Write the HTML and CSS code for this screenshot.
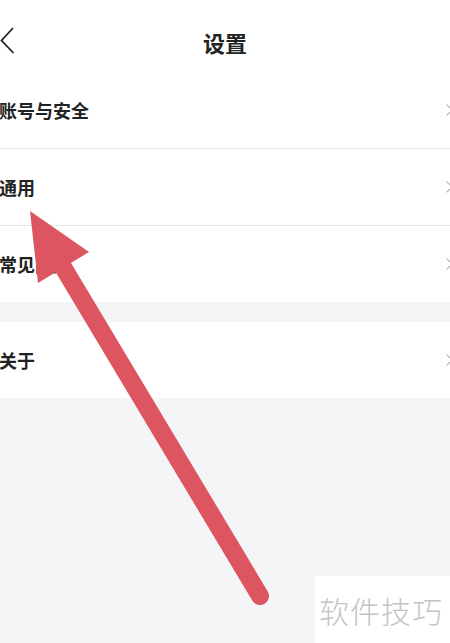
FILE: index.html
```html
<!DOCTYPE html>
<html lang="zh">
<head>
<meta charset="utf-8">
<link rel="stylesheet" href="styles.css">
</head>
<body>
<div class="page">
  <header class="header">
    <svg class="back" width="18" height="28" viewBox="0 0 18 28"><path d="M13 1 L1.5 13.5 L13.5 26" fill="none" stroke="#222" stroke-width="1.8"/></svg>
    <h1 class="title">设置</h1>
  </header>
  <section class="group">
    <div class="row"><span class="label">账号与安全</span><span class="chev"></span></div>
    <div class="row"><span class="label">通用</span><span class="chev"></span></div>
    <div class="row"><span class="label">常见问题</span><span class="chev"></span></div>
  </section>
  <section class="group gap">
    <div class="row"><span class="label">关于</span><span class="chev"></span></div>
  </section>
</div>
<svg class="arrow" width="450" height="643" viewBox="0 0 450 643">
  <line x1="60" y1="262" x2="260" y2="596" stroke="#dd5561" stroke-width="18" stroke-linecap="round"/>
  <polygon points="30,211 89,252 38,283" fill="#dd5561"/>
</svg>
<div class="watermark">软件技巧</div>
</body>
</html>
```
FILE: styles.css
```css
html, body {
  margin: 0;
  padding: 0;
}
body {
  width: 450px;
  height: 643px;
  overflow: hidden;
  background: #f4f5f7;
  font-family: "Noto Sans CJK SC", "Noto Sans", sans-serif;
  color: #222;
  position: relative;
}
.header {
  height: 72px;
  background: #fff;
  display: flex;
  align-items: center;
  justify-content: center;
  position: relative;
}
.back {
  position: absolute;
  left: 0;
  top: 27px;
}
.title {
  margin: 0;
  font-size: 22px;
  font-weight: 700;
  line-height: 1;
  margin-top: 12px;
}
.group {
  background: #fff;
}
.gap {
  margin-top: 20px;
}
.row {
  height: 76px;
  display: flex;
  align-items: center;
  justify-content: space-between;
  border-bottom: 1px solid #e6e6e6;
  padding-left: 0;
}
.row:last-child {
  border-bottom: none;
}
.label {
  font-size: 18px;
  font-weight: 700;
  margin-left: -1px;
  letter-spacing: 0;
}
.chev {
  width: 7px;
  height: 7px;
  border-top: 1.5px solid #aaa;
  border-right: 1.5px solid #aaa;
  transform: rotate(45deg);
  margin-right: -1px;
}
.arrow {
  position: absolute;
  left: 0;
  top: 0;
}
.watermark {
  position: absolute;
  left: 315px;
  top: 576px;
  width: 135px;
  height: 67px;
  background: #fff;
  color: #c4c4c4;
  font-size: 30px;
  font-weight: 300;
  display: flex;
  align-items: center;
  padding-left: 4px;
  box-sizing: border-box;
  letter-spacing: 1px;
}
```
